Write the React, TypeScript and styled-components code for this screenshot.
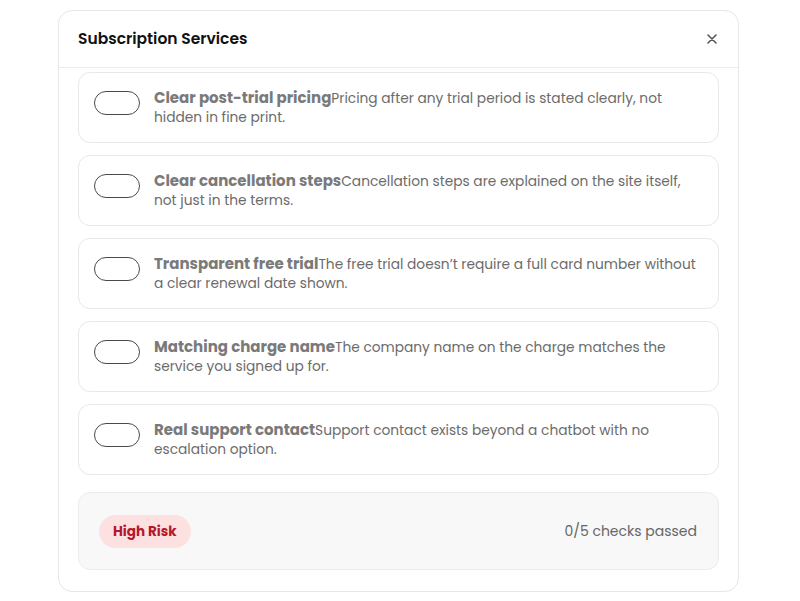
import React, { useState } from 'react';
import styled, { createGlobalStyle } from 'styled-components';

interface Check {
  id: string;
  title: string;
  description: string;
}

const checks: Check[] = [
  {
    id: 'pricing',
    title: 'Clear post-trial pricing',
    description: 'Pricing after any trial period is stated clearly, not hidden in fine print.',
  },
  {
    id: 'cancel',
    title: 'Clear cancellation steps',
    description: 'Cancellation steps are explained on the site itself, not just in the terms.',
  },
  {
    id: 'trial',
    title: 'Transparent free trial',
    description:
      'The free trial doesn\u2019t require a full card number without a clear renewal date shown.',
  },
  {
    id: 'charge',
    title: 'Matching charge name',
    description: 'The company name on the charge matches the service you signed up for.',
  },
  {
    id: 'support',
    title: 'Real support contact',
    description: 'Support contact exists beyond a chatbot with no escalation option.',
  },
];

const GlobalStyle = createGlobalStyle`
  html, body {
    margin: 0;
    padding: 0;
    background: #ffffff;
  }
  body {
    font-family: 'Poppins', 'DejaVu Sans', 'Noto Sans', sans-serif;
    color: #222;
  }
`;

const Page = styled.div`
  padding: 10px 61px 10px 58px;
`;

const Modal = styled.div`
  width: 681px;
  box-sizing: border-box;
  border: 1px solid #e6e6e6;
  border-radius: 14px;
  background: #fff;
  display: flex;
  flex-direction: column;
`;

const Header = styled.div`
  height: 57px;
  display: flex;
  align-items: center;
  justify-content: space-between;
  padding: 0 18px 1px 19px;
  box-sizing: border-box;
  border-bottom: 1px solid #ececec;
`;

const Title = styled.h2`
  margin: 0;
  font-size: 15.5px;
  font-weight: 600;
  color: #111;
`;

const CloseButton = styled.button`
  border: none;
  background: none;
  padding: 0;
  width: 16px;
  height: 16px;
  display: flex;
  align-items: center;
  justify-content: center;
  color: #555;
  cursor: pointer;
`;

const Body = styled.div`
  padding: 4px 19px 21px;
  display: flex;
  flex-direction: column;
`;

const List = styled.div`
  display: flex;
  flex-direction: column;
  gap: 12px;
`;

const Item = styled.label`
  display: flex;
  align-items: flex-start;
  gap: 14px;
  padding: 15px;
  border: 1px solid #e8e8e8;
  border-radius: 12px;
  cursor: pointer;
`;

const Toggle = styled.span<{ $on: boolean }>`
  flex: none;
  box-sizing: border-box;
  width: 46px;
  height: 24px;
  margin-top: 3px;
  border: 1.5px solid #4a4a4a;
  border-radius: 12px;
  background: ${(p) => (p.$on ? '#16a34a' : '#fff')};
`;

const Text = styled.p`
  margin: 0;
  font-size: 13.75px;
  line-height: 19px;
  color: #6b6b6b;
`;

const ItemTitle = styled.strong`
  font-size: 15px;
  line-height: 19px;
  font-weight: 700;
  color: #7a7a7a;
`;

const Summary = styled.div`
  margin-top: 17px;
  display: flex;
  align-items: center;
  justify-content: space-between;
  padding: 22px 21px 21px 20px;
  border: 1px solid #ececec;
  border-radius: 12px;
  background: #f8f8f8;
`;

const Badge = styled.span`
  display: inline-flex;
  align-items: center;
  height: 33px;
  padding: 0 14px;
  border-radius: 17px;
  background: #fde1e1;
  color: #b5172b;
  font-size: 13.5px;
  font-weight: 700;
`;

const Score = styled.span`
  font-size: 14px;
  color: #666;
`;

const App = () => {
  const [passed, setPassed] = useState<Record<string, boolean>>({});
  const count = checks.filter((c) => passed[c.id]).length;

  return (
    <>
      <GlobalStyle />
      <Page>
        <Modal>
          <Header>
            <Title>Subscription Services</Title>
            <CloseButton aria-label='Close'>
              <svg width='10' height='10' viewBox='0 0 10 10'>
                <path d='M1 1L9 9M9 1L1 9' stroke='currentColor' strokeWidth='1.6' strokeLinecap='round' />
              </svg>
            </CloseButton>
          </Header>
          <Body>
            <List>
              {checks.map((c) => (
                <Item key={c.id} onClick={() => setPassed({ ...passed, [c.id]: !passed[c.id] })}>
                  <Toggle $on={!!passed[c.id]} />
                  <Text>
                    <ItemTitle>{c.title}</ItemTitle>
                    {c.description}
                  </Text>
                </Item>
              ))}
            </List>
            <Summary>
              <Badge>{count >= 4 ? 'Low Risk' : count >= 2 ? 'Medium Risk' : 'High Risk'}</Badge>
              <Score>{count}/5 checks passed</Score>
            </Summary>
          </Body>
        </Modal>
      </Page>
    </>
  );
};

export default App;
